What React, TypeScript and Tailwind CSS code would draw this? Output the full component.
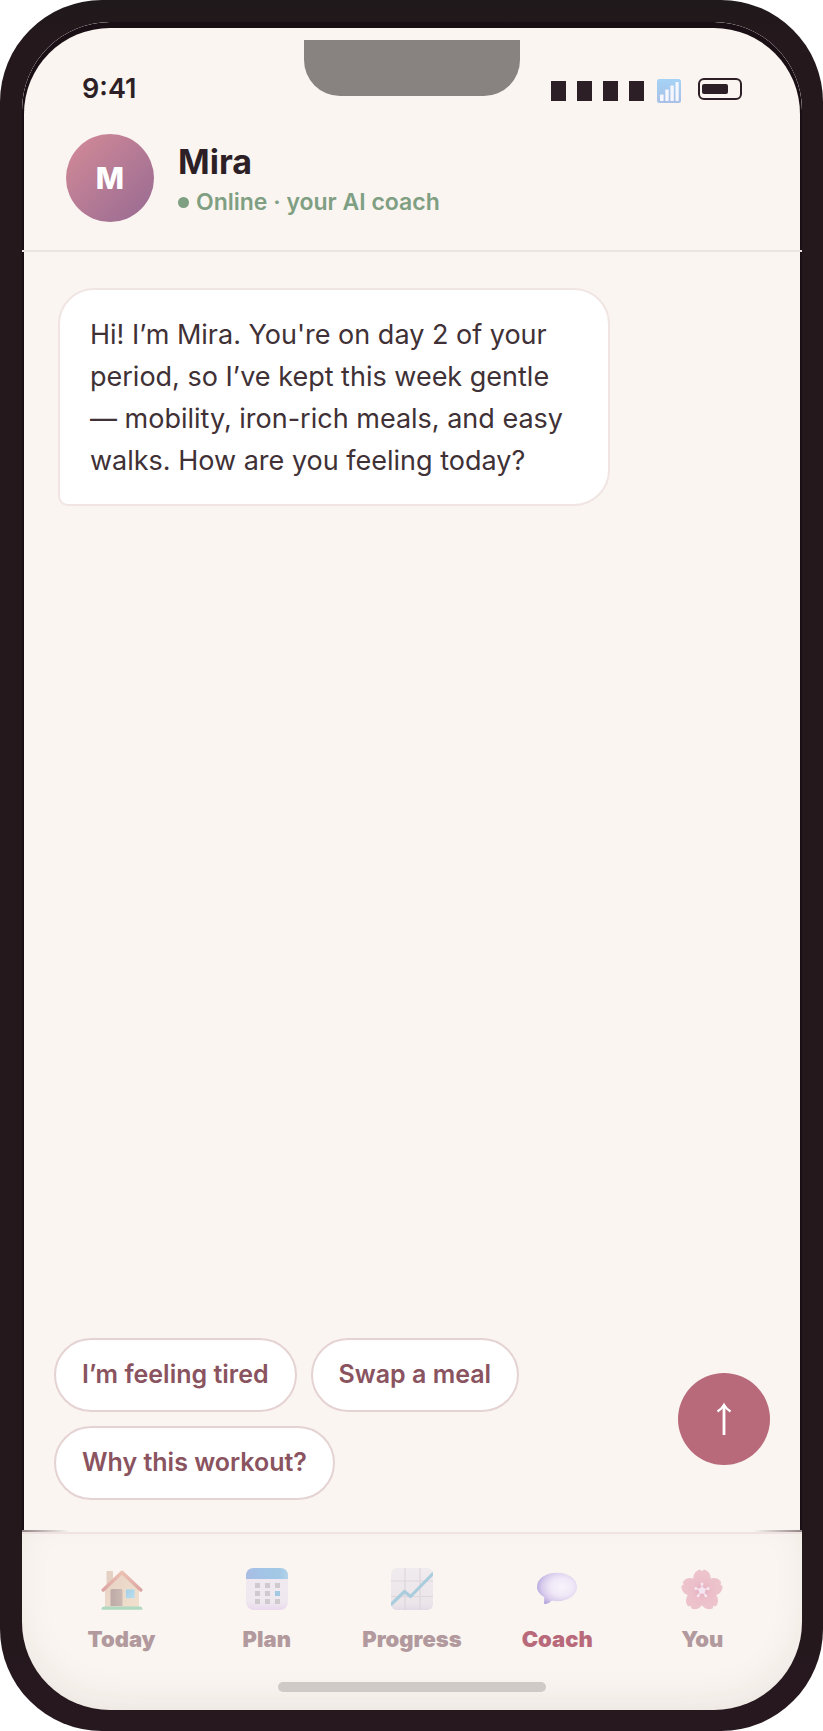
import { useState, type ReactNode } from 'react'
import clsx from 'clsx'

function SignalIcon() {
  return (
    <svg viewBox="0 0 24 24" className="size-6" aria-hidden="true">
      <defs>
        <linearGradient id="signal" x1="0" y1="0" x2="0" y2="1">
          <stop offset="0" stopColor="#a5d3f6" />
          <stop offset="1" stopColor="#a9c0e6" />
        </linearGradient>
      </defs>
      <rect width="24" height="24" rx="2.5" fill="url(#signal)" />
      <g fill="#f6f6fd">
        <rect x="3" y="15.5" width="3.6" height="6.5" rx="0.8" />
        <rect x="8.3" y="10.5" width="3.4" height="11.5" rx="0.8" />
        <rect x="13.4" y="6.5" width="3.4" height="15.5" rx="0.8" />
        <rect x="18.5" y="3" width="3.2" height="19" rx="0.8" />
      </g>
    </svg>
  )
}

function HouseIcon() {
  return (
    <svg viewBox="0 0 42 42" className="size-[42px]" aria-hidden="true">
      <defs>
        <linearGradient id="wall" x1="0" y1="0" x2="1" y2="1">
          <stop offset="0" stopColor="#e8d2c5" />
          <stop offset="1" stopColor="#f0e0cd" />
        </linearGradient>
        <linearGradient id="door" x1="0" y1="0" x2="1" y2="0">
          <stop offset="0" stopColor="#bda9a6" />
          <stop offset="1" stopColor="#cbbab4" />
        </linearGradient>
        <linearGradient id="pane" x1="0" y1="0" x2="1" y2="1">
          <stop offset="0" stopColor="#a5cfe6" />
          <stop offset="1" stopColor="#b9def0" />
        </linearGradient>
        <linearGradient id="roof" x1="0" y1="0" x2="0" y2="1">
          <stop offset="0" stopColor="#ecc0b2" />
          <stop offset="1" stopColor="#dda5a4" />
        </linearGradient>
      </defs>
      <path d="M5.5 4q0-1 1-1h4.500q1 0 1 1v14h-6.500z" fill="#e5d1c3" />
      <path d="M4 20 21 5l17 15v19H4z" fill="url(#wall)" />
      <path d="M9.500 22.500q0-1.500 1.500-1.500h9q1.500 0 1.500 1.500V38h-12z" fill="url(#door)" />
      <rect x="24.500" y="21" width="9.500" height="9.500" fill="url(#pane)" stroke="#ecdfd0" strokeWidth="0.800" />
      <path d="M2.200 22 21 4.200 39.800 22" fill="none" stroke="url(#roof)" strokeWidth="3.400" strokeLinecap="round" strokeLinejoin="round" />
      <path d="M.5 41.700q0-3.200 3-3.200h35q3 0 3 3.200z" fill="#b0d9c1" />
    </svg>
  )
}

function CalendarIcon() {
  const dots = [9, 19, 29]
  return (
    <svg viewBox="0 0 42 42" className="size-[42px]" aria-hidden="true">
      <defs>
        <linearGradient id="calTop" x1="0" y1="0" x2="1" y2="0">
          <stop offset="0" stopColor="#a9bce4" />
          <stop offset=".3" stopColor="#a3c3e6" />
          <stop offset=".8" stopColor="#a2c9e6" />
          <stop offset="1" stopColor="#b3d3ea" />
        </linearGradient>
        <linearGradient id="calBody" x1="0" y1="0" x2="0" y2="1">
          <stop offset="0" stopColor="#f0eaf0" />
          <stop offset=".8" stopColor="#efe8ef" />
          <stop offset="1" stopColor="#ead9ee" />
        </linearGradient>
      </defs>
      <rect width="42" height="42" rx="8" fill="url(#calBody)" />
      <path d="M0 11V8q0-8 8-8h26q8 0 8 8v3z" fill="url(#calTop)" />
      {dots.map((x, col) =>
        [15, 23, 31].map((y, row) => (
          <rect key={`${x}-${y}`} x={x} y={y} width="5" height="5" fill={col === 2 && row === 1 ? '#a3cae3' : '#cfcace'} />
        )),
      )}
    </svg>
  )
}

function ChartIcon() {
  return (
    <svg viewBox="0 0 42 42" className="size-[42px]" aria-hidden="true">
      <defs>
        <linearGradient id="chart" x1="0" y1="0" x2="0" y2="1">
          <stop offset="0" stopColor="#f0ebee" />
          <stop offset=".85" stopColor="#ebe5ea" />
          <stop offset="1" stopColor="#e3dbe7" />
        </linearGradient>
        <clipPath id="chartClip">
          <rect width="42" height="42" rx="6" />
        </clipPath>
      </defs>
      <g clipPath="url(#chartClip)">
        <rect width="42" height="42" fill="url(#chart)" />
        <path d="M14 0v42M29 0v42M0 13h42M0 28.500h42" stroke="#ddd6dc" strokeWidth="1.200" />
        <path d="M-1 37.500 13.500 23.500l6 5L43 4.500" fill="none" stroke="#aacddd" strokeWidth="3.200" strokeLinejoin="round" />
      </g>
    </svg>
  )
}

function BubbleIcon() {
  return (
    <svg viewBox="0 0 42 42" className="size-[42px]" aria-hidden="true">
      <defs>
        <radialGradient id="bubble" cx=".62" cy=".45" r=".66">
          <stop offset="0" stopColor="#f8f4fc" />
          <stop offset=".45" stopColor="#efe7f7" />
          <stop offset=".75" stopColor="#d8cbec" />
          <stop offset="1" stopColor="#b0a2dc" />
        </radialGradient>
      </defs>
      <path d="M21 4.800c11.500 0 20 6.200 20 14.200s-8.500 14.200-20 14.200c-2.500 0-4-.2-5.500-.4-1.500 1.700-3.500 2.900-6 3.300-1.200.2-1.500-.3-1.300-1.500V29C4 26.500 1 23 1 19 1 11 9.500 4.800 21 4.800z" fill="url(#bubble)" />
    </svg>
  )
}

function BlossomIcon() {
  return (
    <svg viewBox="0 0 42 42" className="size-[42px]" aria-hidden="true">
      <defs>
        <radialGradient id="petal" gradientUnits="userSpaceOnUse" cx="21" cy="23" r="21">
          <stop offset="0" stopColor="#e5afbf" />
          <stop offset=".5" stopColor="#ecbfca" />
          <stop offset="1" stopColor="#edc5cc" />
        </radialGradient>
      </defs>
      {[0, 72, 144, 216, 288].map((angle) => (
        <g key={angle} transform={`rotate(${angle} 21 22.500)`}>
          <path d="M21 23.500C15.500 20 12.300 15 12.300 10.500c0-4.500 2.700-8 6.700-8.900l2 1.600 2-1.600c4 .9 6.700 4.400 6.700 8.900 0 4.500-3.200 9.500-8.700 13z" fill="url(#petal)" />
        </g>
      ))}
      {[0, 72, 144, 216, 288].map((angle) => (
        <g key={angle} transform={`rotate(${angle} 21 22.500)`}>
          <path d="M21 22.500V16.500" stroke="#f4e4ee" strokeWidth="1.300" />
          <circle cx="21" cy="16" r="1.500" fill="#f5e6ef" />
        </g>
      ))}
      <circle cx="21" cy="22.500" r="3.200" fill="#f3e5f2" />
    </svg>
  )
}

const tabs: { key: string; label: string; icon: ReactNode }[] = [
  { key: 'today', label: 'Today', icon: <HouseIcon /> },
  { key: 'plan', label: 'Plan', icon: <CalendarIcon /> },
  { key: 'progress', label: 'Progress', icon: <ChartIcon /> },
  { key: 'coach', label: 'Coach', icon: <BubbleIcon /> },
  { key: 'you', label: 'You', icon: <BlossomIcon /> },
]

const suggestions = ['I’m feeling tired', 'Swap a meal', 'Why this workout?']

function StatusBar() {
  return (
    <div className="flex h-[106px] items-center justify-between px-[58px] pt-4">
      <span className="text-[27px] leading-8 font-semibold">9:41</span>
      <div className="flex items-center">
        <div className="mt-1 flex gap-[11px]">
          {[0, 1, 2, 3].map((bar) => (
            <span key={bar} className="h-5 w-[15px] bg-[#2d1f26]" />
          ))}
        </div>
        <span className="mt-1 ml-[13px]"><SignalIcon /></span>
        <span className="ml-[17px] flex h-[22px] w-11 items-center rounded-md border-2 border-[#2d1f26] pl-0.5">
          <span className="h-2.5 w-[26px] rounded-xs bg-[#2d1f26]" />
        </span>
      </div>
    </div>
  )
}

function CoachHeader() {
  return (
    <div className="flex h-[116px] items-start gap-6 pl-[42px]">
      <div className="flex size-[88px] items-center justify-center rounded-full bg-linear-135 from-[#d58b97] to-[#976a92] text-3xl font-extrabold text-white">
        M
      </div>
      <div className="pt-2">
        <h1 className="text-[34px] leading-10 font-bold">Mira</h1>
        <p className="flex items-center gap-[7px] text-[23px] leading-10 font-semibold text-[#7f9f83]">
          <span className="size-[11px] rounded-full bg-[#7f9f83]" />
          Online · your AI coach
        </p>
      </div>
    </div>
  )
}

export default function App() {
  const [active, setActive] = useState('coach')

  return (
    <div className="flex min-h-screen flex-col rounded-[102px] bg-[linear-gradient(#1f191b,#24181c_2%,#24181c_92%,#27181f)] pt-[22px] pr-[21px] pb-[21px] pl-[22px] font-['Inter',sans-serif] text-[#2d1f26]">
      <div className="flex grow flex-col overflow-hidden rounded-[88px] bg-[#faf5f0]">
        <div className="flex grow flex-col rounded-t-[88px] bg-[#190f15]">
          <header className="border-b-2 border-[#ebe5e2] px-0.5 pt-1.5">
            <div className="relative rounded-t-[86px] bg-[#faf5f0]">
              <div className="absolute top-3 left-1/2 h-14 w-[216px] -translate-x-1/2 rounded-b-[36px] bg-[#888281]" />
              <StatusBar />
              <CoachHeader />
            </div>
          </header>

          <main className="mx-0.5 flex grow flex-col justify-between bg-[#faf5f0]">
            <div className="px-[34px] pt-9">
              <p className="max-w-[552px] rounded-[36px] rounded-bl-[10px] border-2 border-[#f0e5e3] bg-white pt-6 pr-9 pb-[22px] pl-[30px] text-[27px] leading-[42px] text-[#403136]">
                Hi! I’m Mira. You're on day 2 of your period, so I’ve kept this week gentle — mobility, iron-rich meals, and easy walks. How are you feeling today?
              </p>
            </div>

            <div className="flex items-center gap-4 px-[30px] pb-[30px]">
              <div className="flex flex-1 flex-wrap gap-[14px]">
                {suggestions.map((text) => (
                  <button key={text} type="button" className="h-[74px] cursor-pointer rounded-full border-2 border-[#e5d3d3] bg-white px-[26px] text-[25px] font-semibold text-[#8a5360]">
                    {text}
                  </button>
                ))}
              </div>
              <button type="button" aria-label="Send" className="flex size-[92px] cursor-pointer items-center justify-center rounded-full bg-[#b86a7b]">
                <svg viewBox="0 0 16 34" className="h-[34px] w-4" fill="none" stroke="#fff" aria-hidden="true">
                  <path d="M8 3v30" strokeWidth="2.800" />
                  <path d="M1.500 9.500Q6 6.500 8 3q2 3.500 6.500 6.500" strokeWidth="2.400" />
                </svg>
              </button>
            </div>
          </main>
          <div className="h-0.5 bg-linear-to-r from-[#8f8585] via-[#faf5f0] via-6% to-[#faf5f0]">
            <div className="ml-auto h-0.5 w-12 bg-linear-to-r from-[#faf5f0] to-[#8f8585]" />
          </div>
        </div>

        <footer className="rounded-b-[88px] border-t-2 border-[#f0e2e0] px-[27px] pt-[34px] pb-[18px] shadow-[inset_0_-14px_44px_-12px_rgba(45,31,38,0.09)]">
          <nav className="grid grid-cols-5">
            {tabs.map((tab) => (
              <button
                key={tab.key}
                type="button"
                onClick={() => setActive(tab.key)}
                className={clsx(
                  'flex cursor-pointer flex-col items-center gap-[13px] text-[22px] leading-8 font-black',
                  active === tab.key ? 'text-[#b86a7b]' : 'text-[#b1999d]',
                )}
              >
                {tab.icon}
                {tab.label}
              </button>
            ))}
          </nav>
          <div className="mx-auto mt-[27px] h-2.5 w-[268px] rounded-full bg-[#cfcac7]" />
        </footer>
      </div>
    </div>
  )
}
